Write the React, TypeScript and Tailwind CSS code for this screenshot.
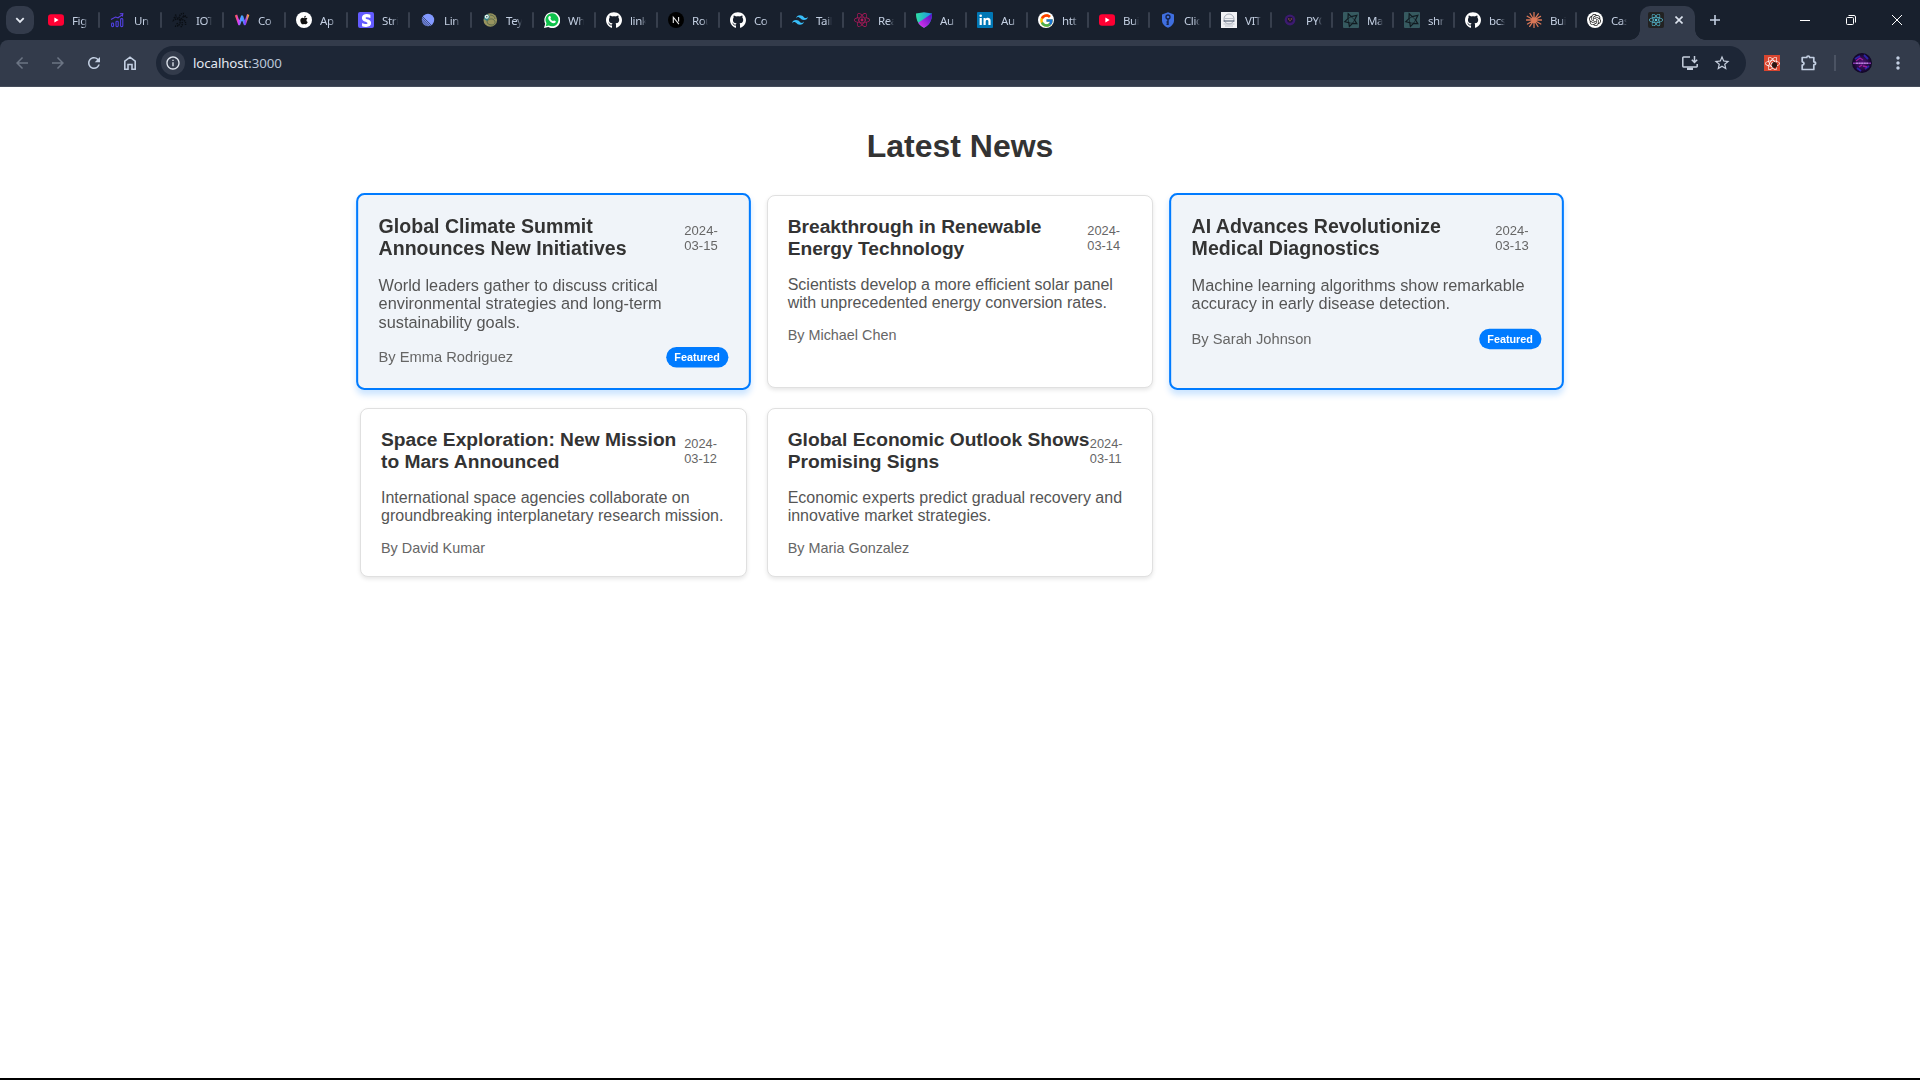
import React from "react";
import { FaApple, FaReact, FaStripeS, FaGithub } from "react-icons/fa";
import { SiTailwindcss, SiOpenai } from "react-icons/si";
import { FcGoogle } from "react-icons/fc";
import {
  MdArrowBack,
  MdArrowForward,
  MdRefresh,
  MdInfoOutline,
  MdStarBorder,
  MdMoreVert,
} from "react-icons/md";

const YouTube = () => (
  <svg viewBox="0 0 16 16" className="size-4">
    <rect y="2.2" width="16" height="11.6" rx="3" fill="#ff0033" />
    <path d="M6.4 5.6 10.6 8l-4.2 2.4z" fill="#fff" />
  </svg>
);

const BarsUp = () => (
  <svg viewBox="0 0 16 16" className="size-4" fill="none" stroke="#4f40e0" strokeWidth="1.1">
    <rect x="1.6" y="11" width="2" height="3.6" rx=".9" />
    <rect x="6" y="9.2" width="2.200" height="5.4" rx=".9" />
    <rect x="10.600" y="6.6" width="2.200" height="8" rx=".9" />
    <path d="M1 7.600 5.500 5l2.500.8 4.600-3.200M9.800 1.800l3-.2-.4 2.900" stroke="#5a3fe0" />
  </svg>
);

const Swirl = () => (
  <svg viewBox="0 0 16 16" className="size-4" fill="none" stroke="#0a0e14" strokeWidth="1.5" strokeDasharray="1.3 .8">
    <path d="M8 8C6 4 9 1 12 1.5M8 8C5 6 1 7 1 10M8 8c1 4-2 7-5 6M8 8c4-1 6 1 5.500 5M9 7c2-3 5-3 6-1M6.500 6.500C4 6 3 4 4 2M10 10c1 2 0 5-2 5M11 4l3 0M2 5l2 3M5 11l1 3" />
  </svg>
);

const Wave = () => (
  <svg viewBox="0 0 16 16" className="size-4" fill="none" strokeWidth="2.4" strokeLinejoin="round">
    <defs>
      <linearGradient id="wave" x1="0" x2="1" y1="0" y2="0">
        <stop offset="0" stopColor="#ff5a5f" />
        <stop offset=".2" stopColor="#d43bff" />
        <stop offset=".48" stopColor="#35b6ff" />
        <stop offset=".78" stopColor="#8c3aff" />
        <stop offset="1" stopColor="#ffa13d" />
      </linearGradient>
    </defs>
    <path d="M2 3 5.200 12l2.900-7.500 2.700 7.500L14.200 2.500" stroke="url(#wave)" />
  </svg>
);

const Apple = () => (
  <span className="flex size-4 items-center justify-center rounded-full bg-white">
    <FaApple size={10} color="#111" />
  </span>
);

const Stripe = () => (
  <span className="flex size-4 items-center justify-center rounded-[2px] bg-[#635bff]">
    <FaStripeS size={13} color="#fff" />
  </span>
);

const Linear = () => (
  <svg viewBox="0 0 16 16" className="size-4">
    <circle cx="8" cy="8" r="6.200" fill="#8299ff" />
    <path d="M1.500 5.800 10.200 14.500M1.500 8 8 14.500M1.500 10.200 5.800 14.500M2.200 4.300l9.500 9.500" stroke="#26304f" strokeWidth=".8" />
  </svg>
);

const Globe = () => (
  <svg viewBox="0 0 16 16" className="size-4">
    <circle cx="8.300" cy="8" r="6.800" fill="#98945f" />
    <path d="M5 9c2-2 5-3 7-1s1 5-2 5-5-1-5-4M8 3c3 0 5 2 5 4" stroke="#5b6a4c" fill="none" />
    <path d="M2.500 3.500 6 2l2 3-3 4-3-2z" fill="#2a7f86" />
    <circle cx="4.800" cy="4.800" r="2" fill="#f2f6f2" />
    <circle cx="4.800" cy="4.800" r=".8" fill="#24545c" />
  </svg>
);

const WhatsApp = () => (
  <svg viewBox="0 0 16 16" className="size-4">
    <path d="M0 16l1.200-4.200A8 8 0 1 1 4.200 15z" fill="#fff" />
    <path d="M1.700 14.300l.8-3A6.500 6.500 0 1 1 4.800 13.500z" fill="#0fc24b" />
    <path d="M5.200 4.200c.4-.4 1-.3 1.200.1l.5 1.200c.1.400-.5.9-.5 1.200.5 1.100 1.400 1.900 2.500 2.400.4.100.8-.8 1.200-.7l1.400.7c.5.300.2 1.300-.3 1.700-1.200.9-3 .3-4.500-.8C5 8.700 4 6.900 4.300 5.600c.1-.6.500-1 .9-1.400z" fill="#fff" />
  </svg>
);

const GitHub = () => <FaGithub size={16.500} color="#fff" />;

const Next = () => (
  <svg viewBox="0 0 16 16" className="size-4">
    <circle cx="8" cy="8" r="8" fill="#000" />
    <path d="M5.300 11V5.200l5.600 7M10.600 5v4.600" stroke="#e8e8e8" strokeWidth="1.100" fill="none" />
  </svg>
);

const Shield = () => (
  <svg viewBox="0 0 16 16" className="size-4">
    <defs>
      <linearGradient id="sh1" x1="0" y1="0" x2="1" y2="0">
        <stop offset="0" stopColor="#2ee0a5" />
        <stop offset="1" stopColor="#1d8ee8" />
      </linearGradient>
      <linearGradient id="sh2" x1="0" y1="1" x2="1" y2="0">
        <stop offset="0" stopColor="#e637f0" />
        <stop offset="1" stopColor="#4a10c0" />
      </linearGradient>
    </defs>
    <path d="M0 1.600 8 .2l8 1.400C16 9 13 13.500 8 15.800 3 13.500 0 9 0 1.600z" fill="url(#sh1)" />
    <path d="M16 1.600C16 9 13 13.500 8 15.800 5.500 14.600 3.500 12.900 2.200 10.800z" fill="url(#sh2)" />
  </svg>
);

const LinkedIn = () => (
  <svg viewBox="0 0 16 16" className="size-4">
    <rect width="16" height="16" rx="1" fill="#0077b5" />
    <rect x="2.600" y="6" width="2.200" height="7" fill="#fff" />
    <circle cx="3.700" cy="3.800" r="1.300" fill="#fff" />
    <path d="M6.500 6h2.100v1c1.100-1.800 5-1.700 5 1.800V13h-2.200V9.400c0-2-2.700-1.900-2.700 0V13H6.500z" fill="#fff" />
  </svg>
);

const Google = () => (
  <span className="flex size-4 items-center justify-center rounded-full bg-white">
    <FcGoogle size={15} />
  </span>
);

const KeyShield = () => (
  <svg viewBox="0 0 16 16" className="size-4">
    <path d="M2 2.500 8 .3l6 2.200v6C14 12 11 14.700 8 15.800 5 14.700 2 12 2 8.500z" fill="#3f6fe0" />
    <circle cx="8" cy="5" r="2" fill="none" stroke="#152247" strokeWidth="1.300" />
    <path d="M8 7v6M8 10H6.500M8 12.300H6.500" stroke="#152247" strokeWidth="1.400" />
  </svg>
);

const Crest = () => (
  <svg viewBox="0 0 16 16" className="size-4">
    <rect width="16" height="16" fill="#f1f2f5" />
    <circle cx="8" cy="7" r="5" fill="none" stroke="#a5acb8" />
    <path d="M2.500 9h11" stroke="#596579" strokeWidth="1.200" />
    <path d="M4 6.500h8M2.500 12h11M4 14h8" stroke="#bcc1ca" />
  </svg>
);

const Purple = () => (
  <svg viewBox="0 0 16 16" className="size-4">
    <circle cx="8" cy="8" r="5.400" fill="#3c1a70" />
    <circle cx="8" cy="7.800" r="3" fill="#1c1433" />
    <path d="M6 7h1.500M8.700 7h1.500M8 8v1.200" stroke="#c2744c" strokeWidth=".9" />
  </svg>
);

const Star4 = () => (
  <svg viewBox="0 0 16 16" className="size-4">
    <rect width="16" height="16" rx="1" fill="#365a60" />
    <path
      d="M5.200 1.800 8.200 4.600 13.800 3.400 11.600 8l2.200 3.600-4.200-.3L6.400 14.400 5.800 10.800 1.800 9.600 5 6.600z"
      fill="none"
      stroke="#101a20"
      strokeWidth="1.200"
    />
    <path d="M8.200 4.600 11.600 8 9.600 11.300 5.800 10.800 5 6.600z" fill="none" stroke="#101a20" strokeWidth=".7" />
  </svg>
);

const Claude = () => (
  <svg viewBox="0 0 16 16" className="size-4">
    <path
      d="M8 .5v15M.5 8h15M4 1.500l8 13M12.300 1.800l-8.600 12.600M1.200 4.200l13.600 7.800M1.500 12l13-7.600"
      stroke="#d97757"
      strokeWidth="1.300"
      strokeLinecap="round"
    />
    <circle cx="8" cy="8" r="2.600" fill="#d97757" />
  </svg>
);

const OpenAI = () => (
  <span className="flex size-4 items-center justify-center rounded-full bg-white">
    <SiOpenai size={12} color="#222" />
  </span>
);

const tabs: { label: string; icon: React.ReactNode }[] = [
  { label: "Fig", icon: <YouTube /> },
  { label: "Un", icon: <BarsUp /> },
  { label: "IOT", icon: <Swirl /> },
  { label: "Co", icon: <Wave /> },
  { label: "Ap", icon: <Apple /> },
  { label: "Stri", icon: <Stripe /> },
  { label: "Lin", icon: <Linear /> },
  { label: "Tey", icon: <Globe /> },
  { label: "Wh", icon: <WhatsApp /> },
  { label: "link", icon: <GitHub /> },
  { label: "Rou", icon: <Next /> },
  { label: "Co", icon: <GitHub /> },
  { label: "Tail", icon: <SiTailwindcss size={16} color="#38bdf8" /> },
  { label: "Rea", icon: <FaReact size={16} color="#b5175c" /> },
  { label: "Au", icon: <Shield /> },
  { label: "Au", icon: <LinkedIn /> },
  { label: "htt", icon: <Google /> },
  { label: "Bui", icon: <YouTube /> },
  { label: "Clic", icon: <KeyShield /> },
  { label: "VIT", icon: <Crest /> },
  { label: "PYQ", icon: <Purple /> },
  { label: "Ma", icon: <Star4 /> },
  { label: "shr", icon: <Star4 /> },
  { label: "bcs", icon: <GitHub /> },
  { label: "Bui", icon: <Claude /> },
  { label: "Cas", icon: <OpenAI /> },
];

function Tab({ label, icon, wide, last }: { label: string; icon: React.ReactNode; wide: boolean; last: boolean }) {
  return (
    <div className={`flex h-10 shrink-0 items-center pl-[10px] ${wide ? "w-[62px]" : "w-[61px]"}`}>
      <span className="flex size-4 shrink-0 items-center justify-center">{icon}</span>
      <span className="ml-2 mt-px w-4 overflow-hidden whitespace-nowrap text-[11.5px] leading-5 tracking-[-0.4px] text-[#c3cfe2] [mask-image:linear-gradient(to_right,black_65%,transparent)]">
        {label}
      </span>
      {!last && <span className="ml-auto h-4 w-[2px] rounded-full bg-[#373f4d]" />}
    </div>
  );
}

function TabStrip() {
  return (
    <div className="flex h-10 bg-[#18202d]">
      <div className="ml-[6px] mr-1 mt-[6px] flex size-7 items-center justify-center rounded-[10px] bg-[#333b4b]">
        <svg viewBox="0 0 10 10" className="size-[10px]" fill="none" stroke="#e4e9f2" strokeWidth="1.800">
          <path d="M1.300 3.200 5 6.900l3.700-3.700" />
        </svg>
      </div>
      {tabs.map((t, i) => (
        <Tab key={i} label={t.label} icon={t.icon} wide={i < 14} last={i === tabs.length - 1} />
      ))}
      <div className="relative ml-[2px] mt-[6px] flex h-[34px] w-[55px] items-center rounded-t-[10px] bg-[#333b4b] pb-[6px] pl-2">
        <span className="absolute -left-[10px] bottom-0 size-[10px] bg-[radial-gradient(circle_at_0_0,transparent_9.5px,#333b4b_10px)]" />
        <span className="absolute -right-[10px] bottom-0 size-[10px] bg-[radial-gradient(circle_at_100%_0,transparent_9.500px,#333b4b_10px)]" />
        <span className="flex size-4 items-center justify-center rounded-[2px] bg-[#222]">
          <FaReact size={14} color="#58c4dc" />
        </span>
        <svg viewBox="0 0 8 8" className="ml-[11px] size-2" stroke="#dce3ee" strokeWidth="1.600">
          <path d="M.5.5l7 7M7.500.5l-7 7" />
        </svg>
      </div>
      <div className="flex h-10 w-10 items-center justify-center">
        <svg viewBox="0 0 10 10" className="size-[10px]" stroke="#c3cfe2" strokeWidth="1.600">
          <path d="M5 0v10M0 5h10" />
        </svg>
      </div>
      <div className="ml-auto flex">
        <div className="flex h-10 w-[46px] items-center justify-center">
          <span className="h-px w-[10px] bg-white" />
        </div>
        <div className="flex h-10 w-[46px] items-center justify-center">
          <svg viewBox="0 0 10 10" className="size-[10px]" fill="none" stroke="#fff">
            <rect x=".5" y="2.500" width="7" height="7" rx="1" />
            <path d="M2.500.5H8A1.500 1.500 0 0 1 9.500 2v5.500" />
          </svg>
        </div>
        <div className="flex h-10 w-[46px] items-center justify-center">
          <svg viewBox="0 0 10 10" className="size-[10px]" stroke="#fff">
            <path d="M0 0l10 10M10 0 0 10" />
          </svg>
        </div>
      </div>
    </div>
  );
}

function Toolbar() {
  return (
    <div className="bg-[#18202d]">
      <div className="flex h-[47px] items-center rounded-t-[8px] border-b border-[#464d5b] bg-[#333b4b]">
        <div className="ml-1 flex items-center text-[#c3cfe2]">
          <span className="flex w-9 justify-center text-[#6c7584]">
            <MdArrowBack size={18} />
          </span>
          <span className="flex w-9 justify-center text-[#6c7584]">
            <MdArrowForward size={18} />
          </span>
          <span className="flex w-9 justify-center">
            <MdRefresh size={18} />
          </span>
          <span className="flex w-9 justify-center">
            <svg viewBox="0 0 12 14" className="h-[14px] w-3" fill="none" stroke="currentColor" strokeWidth="1.600">
              <path d="M.8 13.200V5.200L6 1.200l5.200 4v8H8V8.500H4v4.700z" />
            </svg>
          </span>
        </div>
        <div className="ml-2 flex h-[34px] w-[1590px] items-center rounded-full bg-[#1d2636] pl-[5px]">
          <span className="flex size-6 items-center justify-center rounded-full bg-[#333b4b] text-[#dfe5ee]">
            <MdInfoOutline size={16} />
          </span>
          <span className="ml-2 text-[13.300px] leading-5 tracking-[-0.100px] text-[#e3e8f1]">
            localhost<span className="text-[#bac5d8]">:3000</span>
          </span>
          <svg viewBox="0 0 16 14" className="ml-auto h-[14px] w-4" fill="none" stroke="#c6cfde" strokeWidth="1.500">
            <path d="M8 1H1.500a.7.7 0 0 0-.7.7v8.600c0 .4.300.7.7.7h13a.7.7 0 0 0 .7-.7V8M12.500 0v6M9.800 3.800l2.700 2.700 2.700-2.700" />
            <path d="M5 12.800h6" strokeWidth="2.400" />
          </svg>
          <MdStarBorder size={18} color="#c6cfde" className="ml-[15px] mr-[15px]" />
        </div>
        <span className="relative ml-[18px] flex size-4 items-center justify-center bg-[#d9452f]">
          <FaReact size={15} color="#fff" />
          <span className="absolute left-[8px] top-[7px] h-[6px] w-[5px] rounded-full bg-[#2a1714]" />
        </span>
        <svg viewBox="0 0 16 16" className="ml-[21px] size-4" fill="none" stroke="#c3cfe2" strokeWidth="1.700">
          <path d="M1.200 2.500h4.600c0-2 2.800-2 2.800 0h4.200v4.300c2.400 0 2.400 3 0 3v4.700H1.200v-4.400c2.400-.3 2.400-3 0-3.300z" strokeLinejoin="round" />
        </svg>
        <span className="ml-[17px] h-4 w-[2px] bg-[#4b5363]" />
        <svg viewBox="0 0 20 20" className="ml-4 size-5">
          <defs>
            <radialGradient id="av">
              <stop offset="0" stopColor="#54177a" />
              <stop offset="1" stopColor="#0d0524" />
            </radialGradient>
          </defs>
          <circle cx="10" cy="10" r="10" fill="url(#av)" />
          <path d="M3 6l5-3M12 2l4 4M5 15l4 3M13 16l4-3" stroke="#2d24a8" strokeWidth="1.800" />
          <path d="M4 8l4-3 3 2M11 13l4 1M7 14l3-2" stroke="#a01a9c" strokeWidth="1.300" fill="none" />
          <path d="M1 10.200h18" stroke="#9a3fc4" strokeWidth="1.200" />
          <path d="M4 10.200h12" stroke="#c9a6e6" strokeWidth="1" strokeDasharray="2 .6" />
        </svg>
        <MdMoreVert size={20} color="#c3cfe2" className="ml-4" />
      </div>
    </div>
  );
}

type Article = { title: string; date: string; text: string; author: string; featured?: boolean };

const articles: Article[] = [
  {
    title: "Global Climate Summit Announces New Initiatives",
    date: "2024-03-15",
    text: "World leaders gather to discuss critical environmental strategies and long-term sustainability goals.",
    author: "Emma Rodriguez",
    featured: true,
  },
  {
    title: "Breakthrough in Renewable Energy Technology",
    date: "2024-03-14",
    text: "Scientists develop a more efficient solar panel with unprecedented energy conversion rates.",
    author: "Michael Chen",
  },
  {
    title: "AI Advances Revolutionize Medical Diagnostics",
    date: "2024-03-13",
    text: "Machine learning algorithms show remarkable accuracy in early disease detection.",
    author: "Sarah Johnson",
    featured: true,
  },
  {
    title: "Space Exploration: New Mission to Mars Announced",
    date: "2024-03-12",
    text: "International space agencies collaborate on groundbreaking interplanetary research mission.",
    author: "David Kumar",
  },
  {
    title: "Global Economic Outlook Shows Promising Signs",
    date: "2024-03-11",
    text: "Economic experts predict gradual recovery and innovative market strategies.",
    author: "Maria Gonzalez",
  },
];

function Card({ a }: { a: Article }) {
  return (
    <article
      className={
        a.featured
          ? "scale-[1.02] rounded-[8px] border-2 border-[#007bff] bg-[#f0f4f9] p-5 shadow-[0_4px_6px_rgba(0,123,255,0.2)]"
          : "rounded-[8px] border border-[#e0e0e0] bg-white p-5 shadow-[0_2px_4px_rgba(0,0,0,0.1)]"
      }
    >
      <div className="mb-4 flex items-center justify-between">
        <h2 className="text-[19.200px] font-bold leading-[22px] text-[#333]">{a.title}</h2>
        <span className="text-[12.800px] leading-[15px] text-[#666]">{a.date}</span>
      </div>
      <p className="mb-[15px] text-[16px] leading-[18px] text-[#555]">{a.text}</p>
      <div className="flex items-center justify-between">
        <span className="text-[14.400px] leading-4 text-[#666]">By {a.author}</span>
        {a.featured && (
          <span className="rounded-full bg-[#007bff] px-2 py-1 text-[10.600px] font-bold leading-3 text-white">
            Featured
          </span>
        )}
      </div>
    </article>
  );
}

export default function App() {
  return (
    <div className="flex h-[1080px] w-[1920px] flex-col overflow-hidden bg-white">
      <header className="font-['Noto_Sans',sans-serif]">
        <TabStrip />
        <Toolbar />
      </header>
      <main className="flex-1 font-['Liberation_Sans',Arial,sans-serif]">
        <div className="mx-auto w-[1200px] pt-[41px]">
          <h1 className="mb-[30px] text-center text-[32px] font-bold leading-[37px] text-[#333]">Latest News</h1>
          <div className="grid grid-cols-3 gap-5">
            {articles.map((a) => (
              <Card key={a.date} a={a} />
            ))}
          </div>
        </div>
      </main>
      <div className="h-[2px] bg-black" />
    </div>
  );
}
